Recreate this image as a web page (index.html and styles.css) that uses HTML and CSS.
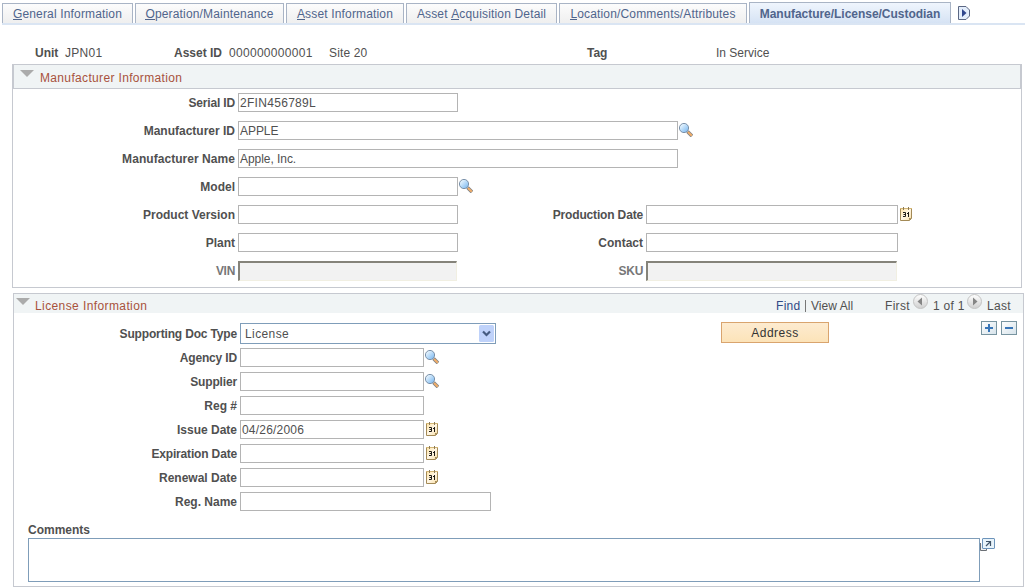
FILE: index.html
```html
<!DOCTYPE html>
<html lang="en">
<head>
<meta charset="utf-8">
<title>Manufacture/License/Custodian</title>
<link rel="stylesheet" href="styles.css">
</head>
<body>
<svg width="0" height="0" class="defs">
  <defs>
    <linearGradient id="lens" x1="0" y1="0" x2="1" y2="1"><stop offset="0.1" stop-color="#f2faff"/><stop offset="1" stop-color="#6fb2ef"/></linearGradient>
    <linearGradient id="paper" x1="0" y1="0" x2="1" y2="1"><stop offset="0" stop-color="#ffe3a4"/><stop offset="0.5" stop-color="#fff6e4"/><stop offset="1" stop-color="#f8dda2"/></linearGradient>
    <linearGradient id="ball" x1="0" y1="0" x2="0" y2="1"><stop offset="0" stop-color="#fff"/><stop offset="1" stop-color="#cfcfcf"/></linearGradient>
    <linearGradient id="tile" x1="0" y1="0" x2="1" y2="1"><stop offset="0" stop-color="#fff"/><stop offset="1" stop-color="#d5e2ea"/></linearGradient>
    <symbol id="search" viewBox="0 0 14 14">
      <path d="M8.500 8.500L13 13" stroke="#7d8288" stroke-width="3.600"/>
      <path d="M9 9l3.800 3.800" stroke="#f3ae68" stroke-width="2"/>
      <circle cx="5" cy="5" r="4.600" fill="url(#lens)" stroke="#7b91a9"/>
    </symbol>
    <symbol id="calendar" viewBox="0 0 12 14">
      <path d="M.5 1.500h11v9.500l-2.500 2.500H.5z" fill="url(#paper)"/>
      <path d="M.5 1.500V13.500H9.500L11.500 11.500V1.500" fill="none" stroke="#a38a57"/>
      <path d="M0 1.500h12" stroke="#d3b675"/>
      <path d="M9 13.500V11h2.500z" fill="#a38a57"/>
      <path d="M3.500 0v3M8.500 0v3" stroke="#8b7a58"/>
      <path d="M3 5.500h2.500v4H3M3.500 7.500h2M7 6.500h1.500M8.500 5v5" fill="none" stroke="#1d1a14"/>
    </symbol>
  </defs>
</svg>

<nav class="tabs">
  <a class="tab t1"><span><u>G</u>eneral Information</span></a>
  <a class="tab t2"><span><u>O</u>peration/Maintenance</span></a>
  <a class="tab t3"><span><u>A</u>sset Information</span></a>
  <a class="tab t4"><span>Asset <u>A</u>cquisition Detail</span></a>
  <a class="tab t5"><span><u>L</u>ocation/Comments/Attributes</span></a>
  <a class="tab t6 active"><span>Manufacture/License/Custodian</span></a>
  <svg class="next" width="12" height="14" viewBox="0 0 12 14"><path d="M.5.500h7.500l3.500 3.500v6l-3.500 3.500H.5z" fill="#e3edfb" stroke="#5b6783"/><path d="M4 3v8l4.500-4z" fill="#2f468c"/></svg>
</nav>

<div class="summary">
  <b>Unit</b><span class="unit">JPN01</span>
  <b class="l2">Asset ID</b><span class="asset">000000000001</span><span class="site">Site 20</span>
  <b class="l3">Tag</b><span class="status">In Service</span>
</div>

<section class="panel maker">
  <header class="bar">
    <svg class="tri" width="14" height="7"><path d="M0 0h14L7 7z" fill="#ababab"/></svg>
    <h2>Manufacturer Information</h2>
  </header>
  <div class="form">
    <div class="row"><label class="tight">Serial ID</label><div class="field">2FIN456789L</div></div>
    <div class="row"><label>Manufacturer ID</label><div class="field wide snug">APPLE</div><svg class="ico"><use href="#search"/></svg></div>
    <div class="row"><label class="loose">Manufacturer Name</label><div class="field wide snug">Apple, Inc.</div></div>
    <div class="row"><label>Model</label><div class="field"></div><svg class="ico"><use href="#search"/></svg></div>
    <div class="row"><label>Product Version</label><div class="field"></div><label class="second tight">Production Date</label><div class="field mid"></div><svg class="cal"><use href="#calendar"/></svg></div>
    <div class="row"><label>Plant</label><div class="field"></div><label class="second">Contact</label><div class="field mid"></div></div>
    <div class="row off"><label>VIN</label><div class="field"></div><label class="second">SKU</label><div class="field mid"></div></div>
  </div>
</section>

<section class="panel license">
  <header class="bar">
    <svg class="tri" width="14" height="7"><path d="M0 0h14L7 7z" fill="#ababab"/></svg>
    <h2>License Information</h2>
    <div class="pager">
      <span class="find">Find</span><i class="sep"></i><span class="all">View All</span><span class="first">First</span>
      <svg width="15" height="15"><circle cx="7.500" cy="7.500" r="7" fill="url(#ball)" stroke="#c4c4c4"/><path d="M9 3.500v8L4.500 7.500z" fill="#858585"/></svg>
      <span class="count">1 of 1</span>
      <svg width="15" height="15"><circle cx="7.500" cy="7.500" r="7" fill="url(#ball)" stroke="#c4c4c4"/><path d="M6 3.500v8l4.500-4z" fill="#858585"/></svg>
      <span class="last">Last</span>
    </div>
  </header>
  <div class="content">
    <div class="form">
      <div class="row doc"><label class="tight">Supporting Doc Type</label><div class="select"><span>License</span><svg width="15" height="17"><rect width="15" height="17" rx="1.500" fill="#bfd2fa"/><path d="M4 6.500l3.500 3.500L11 6.500" fill="none" stroke="#455b80" stroke-width="2.200"/></svg></div></div>
      <div class="row"><label class="tight">Agency ID</label><div class="field"></div><svg class="ico"><use href="#search"/></svg></div>
      <div class="row"><label class="tight">Supplier</label><div class="field"></div><svg class="ico"><use href="#search"/></svg></div>
      <div class="row"><label>Reg #</label><div class="field"></div></div>
      <div class="row"><label>Issue Date</label><div class="field date">04/26/2006</div><svg class="cal"><use href="#calendar"/></svg></div>
      <div class="row"><label class="tight">Expiration Date</label><div class="field"></div><svg class="cal"><use href="#calendar"/></svg></div>
      <div class="row"><label>Renewal Date</label><div class="field"></div><svg class="cal"><use href="#calendar"/></svg></div>
      <div class="row"><label>Reg. Name</label><div class="field name"></div></div>
    </div>
    <button class="address">Address</button>
    <div class="actions">
      <svg width="16" height="14"><rect x=".5" y=".5" width="15" height="13" fill="url(#tile)" stroke="#7894a0"/><path d="M4 7h8M8 3v8" stroke="#3976b8" stroke-width="2"/></svg>
      <svg width="16" height="14"><rect x=".5" y=".5" width="15" height="13" fill="url(#tile)" stroke="#7894a0"/><path d="M4 7h8" stroke="#3976b8" stroke-width="2"/></svg>
    </div>
  </div>
  <div class="comments">
    <label>Comments</label>
    <div class="entry"><div class="area"></div>
      <svg width="15" height="13"><path d="M.5 5v7.500h6V11" fill="#f2f2f2" stroke="#6a6f75"/><rect x="2.500" y=".5" width="12" height="10" rx=".5" fill="#e8f3fa" stroke="#6d94bb"/><path d="M6 8l4.500-4.500M6 3.500h4.500V8" fill="none" stroke="#3f5368" stroke-width="1.200"/></svg>
    </div>
  </div>
</section>
</body>
</html>
```
FILE: styles.css
```css
* { box-sizing: border-box; }
body {
  margin: 0; width: 1025px; height: 587px; overflow: hidden; background: #fff;
  font: 12px/14px "Liberation Sans", Arial, sans-serif;
  letter-spacing: .3px; color: #505050; white-space: nowrap;
}
.defs { display: block; height: 0; }
svg { display: block; flex: none; }
b, label { font-weight: bold; letter-spacing: 0; }
.tight { letter-spacing: -.16px; }
.loose { letter-spacing: .05px; }

.tabs { display: flex; align-items: flex-end; gap: 2px; height: 25px; margin-left: 2px; border-bottom: 2px solid #dae5f3; }
.tab {
  flex: none; height: 20px; display: flex; justify-content: center; padding-top: 3px;
  border: 1px solid #a9b4c5; border-bottom: 0; color: #50658c; letter-spacing: .16px;
  background: linear-gradient(#fcfcfc, #efefef);
}
.tab u { display: inline-block; line-height: 12px; height: 12px; text-decoration: none; border-bottom: 1px solid #50658c; }
.t1 { width: 131px; } .t2 { width: 149px; } .t3 { width: 118px; }
.t4 { width: 151px; } .t5 { width: 188px; } .t6 { width: 202px; }
.tab.active { height: 21px; padding-top: 4px; font-weight: bold; letter-spacing: -.03px; background: linear-gradient(#eff5fd, #d6e3f4); }
.next { margin: 0 0 3px 5px; }

.summary { display: flex; height: 39px; padding: 21px 0 0 35px; }
.unit { margin-left: 8px; width: 100px; }
.summary b { width: 22px; }
.summary .l2 { width: 47px; margin-left: 9px; }
.asset { width: 84px; margin-left: 8px; }
.site { width: 38px; margin-left: 16px; letter-spacing: .15px; }
.summary .l3 { margin-left: 220px; width: 21px; }
.status { margin-left: 108px; letter-spacing: 0; }

.panel { border: 1px solid #c6c9d0; }
.maker { margin-left: 12px; width: 1010px; height: 224px; }
.bar { display: flex; background: #f0f4f5; }
.maker .bar { height: 24px; border: solid #c6c9d0; border-width: 0 1px 1px; padding: 5px 0 0 6px; }
h2 { margin: 0; font-size: 12px; line-height: 14px; font-weight: normal; color: #a8523c; }
.maker h2 { margin: 1px 0 0 6px; letter-spacing: .34px; }
.row { display: flex; align-items: center; height: 19px; }
.maker .form { padding-top: 4px; display: flex; flex-direction: column; gap: 9px; }
.row label { width: 222px; margin-right: 3px; text-align: right; }
.row .second { width: 185px; }
.field { width: 220px; height: 19px; border: 1px solid #b4b4b4; padding: 2px 0 0 1px; background: #fff; }
.snug { letter-spacing: -.05px; }
.date { letter-spacing: .2px; }
.wide { width: 440px; }
.mid { width: 252px; }
.ico { width: 14px; height: 14px; margin: 0 0 1px 1px; }
.cal { width: 12px; height: 14px; margin: 0 0 1px 2px; }
.off { height: 20px; }
.off label { color: #777; letter-spacing: -.3px; }
.off .field {
  width: 219px; height: 20px; background: #f2f2f2;
  border: solid; border-width: 2px 1px 1px 2px; border-color: #85837a #f1efe2 #f1efe2 #85837a;
}
.off .second { width: 186px; }
.off .mid { width: 251px; }

.license { margin: 5px 0 0 13px; width: 1011px; height: 294px; }
.license .bar { height: 19px; padding: 4px 0 0 2px; }
.license h2 { margin: 1px 0 0 5px; width: 112px; letter-spacing: .4px; }
.pager { display: flex; margin-left: 629px; }
.pager span { margin-top: 1px; flex: none; }
.pager svg { margin-top: -4px; }
.find { width: 24px; color: #304a86; }
.sep { width: 1px; height: 12px; margin: 2px 5px 0; background: #777; }
.all { width: 42px; letter-spacing: .05px; }
.first { width: 24px; margin: 0 4px 0 32px; }
.count { width: 30px; margin: 0 4px 0 5px; }
.last { margin-left: 5px; }

.content { display: flex; height: 198px; padding-top: 10px; align-items: flex-start; }
.license .form { display: flex; flex-direction: column; gap: 5px; width: 707px; }
.license .row label { width: 223px; }
.license .field { width: 184px; }
.license .field.name { width: 251px; }
.license .row.doc { height: 20px; }
.doc label { padding-top: 2px; }
.select { display: flex; justify-content: space-between; align-items: center; width: 256px; height: 21px; border: 1px solid #7f9db9; padding: 0 1px 0 4px; letter-spacing: .4px; }
.select span { padding-top: 1px; }
.address {
  width: 108px; height: 21px; margin-top: -1px; padding: 0; flex: none;
  font: 12px "Liberation Sans", Arial, sans-serif; letter-spacing: .5px; color: #333;
  border: 1px solid #d9a46e; background: linear-gradient(#fdebd0, #fce3b8);
}
.actions { display: flex; gap: 4px; margin: -2px 0 0 152px; }
.comments { padding-left: 14px; margin-top: 12px; }
.comments label { display: block; height: 15px; line-height: 14px; }
.entry { display: flex; }
.area { width: 952px; height: 44px; border: 1px solid #7f9db9; }
```
